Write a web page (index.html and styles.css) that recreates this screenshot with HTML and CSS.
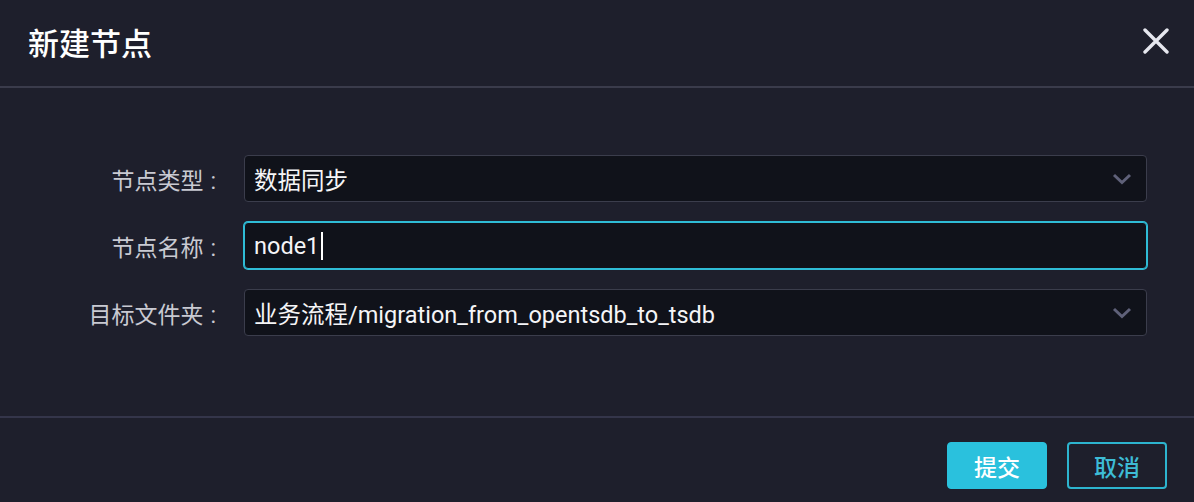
FILE: index.html
```html
<!DOCTYPE html>
<html lang="zh-CN">

<head>
    <meta charset="UTF-8">
    <title>新建节点</title>
    <link rel="stylesheet" href="styles.css">
</head>

<body>

    <div class="dlg">
        <div class="dlg_header">
            <span class="dlg_title">新建节点</span>
            <span class="dlg_close">
                <svg width="26" height="26" viewBox="0 0 26 26">
                    <path d="M2 2 L24 24 M24 2 L2 24" stroke="#e6e7ef" stroke-width="3.4" stroke-linecap="round" fill="none" />
                </svg>
            </span>
        </div>

        <div class="dlg_body">
            <!--node type-->
            <div class="form_row">
                <label class="form_label">节点类型<span class="colon">:</span></label>
                <div class="form_field field_select">
                    <span class="field_text">数据同步</span>
                    <svg class="chevron" width="20" height="12" viewBox="0 0 20 12">
                        <path d="M2 2 L10 9.5 L18 2" stroke="#5f6179" stroke-width="3" fill="none" />
                    </svg>
                </div>
            </div>

            <!--node name, focused-->
            <div class="form_row">
                <label class="form_label">节点名称<span class="colon">:</span></label>
                <div class="form_field field_focus">
                    <span class="field_text">node1</span><span class="caret"></span>
                </div>
            </div>

            <!--target folder-->
            <div class="form_row">
                <label class="form_label">目标文件夹<span class="colon">:</span></label>
                <div class="form_field field_select">
                    <span class="field_text">业务流程/migration_from_opentsdb_to_tsdb</span>
                    <svg class="chevron" width="20" height="12" viewBox="0 0 20 12">
                        <path d="M2 2 L10 9.5 L18 2" stroke="#5f6179" stroke-width="3" fill="none" />
                    </svg>
                </div>
            </div>
        </div>

        <div class="dlg_footer">
            <button class="btn btn_primary">提交</button>
            <button class="btn btn_ghost">取消</button>
        </div>
    </div>

</body>

</html>
```

FILE: styles.css
```css
* {
    margin: 0px;
    padding: 0px;
    box-sizing: border-box;
}

body {
    background-color: #1e1f2c;
    font-family: "Roboto", "Noto Sans CJK SC", sans-serif;
    color: #f2f2f5;
}

.dlg {
    width: 1194px;
    height: 502px;
    display: flex;
    flex-direction: column;
}

.dlg_header {
    height: 88px;
    border-bottom: 2px solid #3a3b4b;
    display: flex;
    align-items: center;
    justify-content: space-between;
    padding: 0 25px 4px 28px;
}

.dlg_title {
    font-family: "Noto Sans CJK SC", sans-serif;
    font-size: 31px;
    font-weight: 500;
    color: #ffffff;
}

.dlg_close {
    display: flex;
}

.dlg_body {
    flex: 1;
    padding: 67px 47px 0 0;
    display: flex;
    flex-direction: column;
    gap: 20px;
}

.form_row {
    display: flex;
    align-items: center;
}

.form_label {
    width: 216px;
    text-align: right;
    font-family: "Noto Sans CJK SC", sans-serif;
    font-size: 23px;
    color: #c9cad2;
}

/*colon sits a little apart from the label text*/
.colon {
    font-family: "Roboto", sans-serif;
    margin-left: 7px;
}

.form_field {
    flex: 1;
    margin-left: 28px;
    height: 47px;
    background-color: #10121a;
    border: 1px solid #3b3d4c;
    border-radius: 4px;
    display: flex;
    align-items: center;
    padding: 0 14px 0 9px;
    font-size: 23.5px;
}

.field_select {
    justify-content: space-between;
}

.field_focus {
    border: 1px solid #2fbcd6;
    box-shadow: 0 0 0 1px #2fbcd6;
}

.field_text {
    color: #f5f5f7;
    white-space: nowrap;
}

.caret {
    width: 2px;
    height: 28px;
    margin-left: 2px;
    background-color: #ffffff;
}

.dlg_footer {
    height: 86px;
    border-top: 2px solid #34354a;
    display: flex;
    justify-content: flex-end;
    align-items: flex-start;
    padding: 24px 27px 0 0;
    gap: 20px;
}

.btn {
    width: 100px;
    height: 47px;
    border-radius: 4px;
    font-family: "Noto Sans CJK SC", sans-serif;
    font-size: 23px;
    font-weight: 500;
    cursor: pointer;
}

.btn_primary {
    background-color: #2ac1dd;
    border: 1px solid #2ac1dd;
    color: #ffffff;
}

.btn_ghost {
    background-color: transparent;
    border: 2px solid #2db4cf;
    color: #3dbcd6;
}
```
